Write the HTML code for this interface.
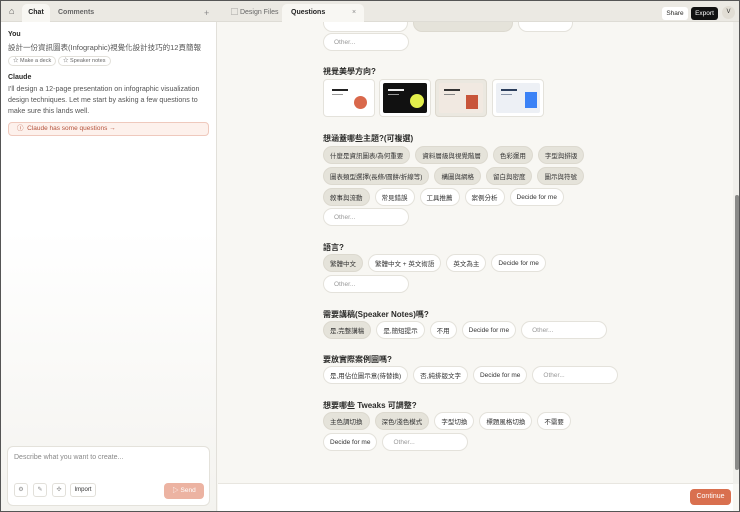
<!DOCTYPE html>
<html><head><meta charset="utf-8"><style>
*{box-sizing:border-box;margin:0;padding:0}
body{width:740px;height:512px;overflow:hidden;font-family:"Liberation Sans","Noto Sans CJK TC",sans-serif;background:#f8f7f3;position:relative;color:#2a2a28}
.frame{position:absolute;inset:0;border:1px solid #555;pointer-events:none;z-index:10}
.left{position:absolute;left:0;top:0;width:217px;height:512px;background:linear-gradient(#fff 0%,#fff 45%,#f4f3ef 100%);border-right:1px solid #e2e0da}
.tabbar{position:absolute;left:0;top:0;width:740px;height:22px;background:#ebe9e3;border-bottom:1px solid #dedcd5}
.tab{position:absolute;top:4px;height:18px;font-size:7px;line-height:18px;color:#555}
.tab.act{background:#f8f7f3;border-radius:5px 5px 0 0;color:#222;font-weight:bold}
.chip{display:inline-flex;align-items:center;height:18px;padding:0 6px;border-radius:9px;border:1px solid #e4e2db;background:#fff;font-size:6.5px;color:#333;white-space:nowrap}
.chip.sel{background:#e5e3da;border-color:#dcd9cf}
.other{display:inline-flex;align-items:center;height:18px;padding:0 10px;border-radius:9px;border:1px solid #e4e2db;background:#fff;font-size:6.5px;color:#999;width:86px}
.row{position:absolute;left:323px;display:flex;gap:5px}
.h{position:absolute;left:323px;font-size:8px;font-weight:bold;color:#2a2a28}
.card{position:absolute;top:79px;width:52px;height:38px;border-radius:4px;border:1px solid #e4e2db;background:#fff}
.card .in{position:absolute;left:3px;top:3px;right:3px;bottom:3px;border-radius:2px}
.l1{position:absolute;left:5px;top:6px;width:16px;height:2px}
.l2{position:absolute;left:5px;top:11px;width:11px;height:1px}
</style></head><body>
<div class="left">
 <div style="position:absolute;left:8px;top:31px;font-size:7px;font-weight:bold">You</div>
 <div style="position:absolute;left:8px;top:42px;font-size:7.5px;color:#555">設計一份資訊圖表(Infographic)視覺化設計技巧的12頁簡報</div>
 <div style="position:absolute;left:8px;top:56px;height:10px;padding:0 4px;border:1px solid #e2e0da;border-radius:5px;font-size:5.5px;line-height:9px;color:#666">☆ Make a deck</div>
 <div style="position:absolute;left:58px;top:56px;height:10px;padding:0 4px;border:1px solid #e2e0da;border-radius:5px;font-size:5.5px;line-height:9px;color:#666">☆ Speaker notes</div>
 <div style="position:absolute;left:8px;top:74px;font-size:7px;font-weight:bold">Claude</div>
 <div style="position:absolute;left:8px;top:84px;width:200px;font-size:7.1px;line-height:11px;color:#555">I'll design a 12-page presentation on infographic visualization design techniques. Let me start by asking a few questions to make sure this lands well.</div>
 <div style="position:absolute;left:8px;top:122px;width:201px;height:14px;border:1px solid #efc9bd;background:#fdf1ec;border-radius:4px;font-size:6.5px;line-height:12px;color:#b5533c;padding-left:8px">ⓘ &nbsp;Claude has some questions →</div>
 <div style="position:absolute;left:7px;top:446px;width:203px;height:60px;background:#fff;border:1px solid #e4e2db;border-radius:6px">
  <div style="position:absolute;left:6px;top:7px;font-size:7px;color:#888">Describe what you want to create...</div>
  <div style="position:absolute;left:6px;top:36px;width:14px;height:14px;border:1px solid #e2e0da;border-radius:3px;font-size:6px;text-align:center;line-height:12px;color:#888">⚙</div>
  <div style="position:absolute;left:25px;top:36px;width:14px;height:14px;border:1px solid #e2e0da;border-radius:3px;font-size:6px;text-align:center;line-height:12px;color:#888">✎</div>
  <div style="position:absolute;left:44px;top:36px;width:14px;height:14px;border:1px solid #e2e0da;border-radius:3px;font-size:6px;text-align:center;line-height:12px;color:#888">✣</div>
  <div style="position:absolute;left:62px;top:36px;width:26px;height:14px;border:1px solid #e2e0da;border-radius:3px;font-size:6px;text-align:center;line-height:12px;color:#333">Import</div>
  <div style="position:absolute;left:156px;top:36px;width:40px;height:16px;background:#ecb3a2;border-radius:4px;font-size:6.5px;text-align:center;line-height:16px;color:#fff">▷ Send</div>
 </div>
</div>
<div class="tabbar">
 <div style="position:absolute;left:9px;top:6px;font-size:9px;color:#555">⌂</div>
 <div class="tab act" style="left:22px;width:28px;text-align:center">Chat</div>
 <div class="tab" style="left:58px;font-weight:bold;color:#666">Comments</div>
 <div class="tab" style="left:204px;font-size:9px;color:#888">+</div>
 <div class="tab" style="left:231px;color:#666">▢ Design Files</div>
 <div class="tab act" style="left:282px;width:82px;padding-left:9px">Questions<span style="position:absolute;left:70px;color:#888;font-weight:normal">×</span></div>
 <div style="position:absolute;left:662px;top:7px;width:26px;height:13px;background:#fff;border-radius:3px;font-size:6.5px;line-height:13px;text-align:center">Share</div>
 <div style="position:absolute;left:691px;top:7px;width:27px;height:13px;background:#111;color:#fff;border-radius:3px;font-size:6.5px;line-height:13px;text-align:center">Export</div>
 <div style="position:absolute;left:722px;top:6px;width:13px;height:13px;border-radius:50%;background:#e1ddd4;font-size:6px;line-height:13px;text-align:center">V</div>
</div>
<div style="position:absolute;left:733px;top:22px;width:7px;height:462px;background:#f0efeb"></div>
<div style="position:absolute;left:735px;top:195px;width:4px;height:275px;background:#8a8a88;border-radius:2px"></div>
<div class="row" style="top:14px;clip-path:inset(8px 0 0 0)"><span class="chip" style="width:85px"></span><span class="chip sel" style="width:100px"></span><span class="chip" style="width:55px"></span></div>
<div class="row" style="top:33px"><span class="other">Other...</span></div>
<div class="h" style="top:66px">視覺美學方向?</div>
<div class="card" style="left:323px"><div class="in" style="background:#fff"><div class="l1" style="background:#222"></div><div class="l2" style="background:#999"></div><div style="position:absolute;left:27px;top:13px;width:13px;height:13px;border-radius:50%;background:#d9684b"></div></div></div>
<div class="card" style="left:379px"><div class="in" style="background:#111"><div class="l1" style="background:#eee"></div><div class="l2" style="background:#999"></div><div style="position:absolute;left:27px;top:11px;width:14px;height:14px;border-radius:50%;background:#e4f04c"></div></div></div>
<div class="card" style="left:435px;background:#ebe8e0;border-color:#ddd9cf"><div class="in" style="background:#f1e9e1"><div class="l1" style="background:#333"></div><div class="l2" style="background:#888"></div><div style="position:absolute;left:27px;top:12px;width:12px;height:14px;background:#c8553a"></div></div></div>
<div class="card" style="left:492px"><div class="in" style="background:#edf0f5"><div class="l1" style="background:#2c3e5c"></div><div class="l2" style="background:#8894a8"></div><div style="position:absolute;left:29px;top:9px;width:12px;height:16px;background:#3b82f6"></div></div></div>
<div class="h" style="top:133px">想涵蓋哪些主題?(可複選)</div>
<div class="row" style="top:146px"><span class="chip sel">什麼是資訊圖表/為何重要</span><span class="chip sel">資料層級與視覺階層</span><span class="chip sel">色彩運用</span><span class="chip sel">字型與排版</span></div>
<div class="row" style="top:167px"><span class="chip sel">圖表類型選擇(長條/圓餅/折線等)</span><span class="chip sel">構圖與網格</span><span class="chip sel">留白與密度</span><span class="chip sel">圖示與符號</span></div>
<div class="row" style="top:188px"><span class="chip sel">敘事與流動</span><span class="chip">常見錯誤</span><span class="chip">工具推薦</span><span class="chip">案例分析</span><span class="chip">Decide for me</span></div>
<div class="row" style="top:208px"><span class="other">Other...</span></div>
<div class="h" style="top:242px">語言?</div>
<div class="row" style="top:254px"><span class="chip sel">繁體中文</span><span class="chip">繁體中文 + 英文術語</span><span class="chip">英文為主</span><span class="chip">Decide for me</span></div>
<div class="row" style="top:275px"><span class="other">Other...</span></div>
<div class="h" style="top:309px">需要講稿(Speaker Notes)嗎?</div>
<div class="row" style="top:321px"><span class="chip sel">是,完整講稿</span><span class="chip">是,簡短提示</span><span class="chip">不用</span><span class="chip">Decide for me</span><span class="other">Other...</span></div>
<div class="h" style="top:354px">要放實際案例圖嗎?</div>
<div class="row" style="top:366px"><span class="chip">是,用佔位圖示意(待替換)</span><span class="chip">否,純排版文字</span><span class="chip">Decide for me</span><span class="other">Other...</span></div>
<div class="h" style="top:400px">想要哪些 Tweaks 可調整?</div>
<div class="row" style="top:412px"><span class="chip sel">主色調切換</span><span class="chip sel">深色/淺色模式</span><span class="chip">字型切換</span><span class="chip">標題風格切換</span><span class="chip">不需要</span></div>
<div class="row" style="top:433px"><span class="chip">Decide for me</span><span class="other">Other...</span></div>
<div style="position:absolute;left:218px;top:483px;width:515px;height:29px;background:#fff;border-top:1px solid #e8e6e0"></div>
<div style="position:absolute;left:690px;top:489px;width:41px;height:16px;background:#d9704f;border-radius:4px;color:#fff;font-size:7px;line-height:16px;text-align:center">Continue</div>
<div class="frame"></div>
</body></html>
